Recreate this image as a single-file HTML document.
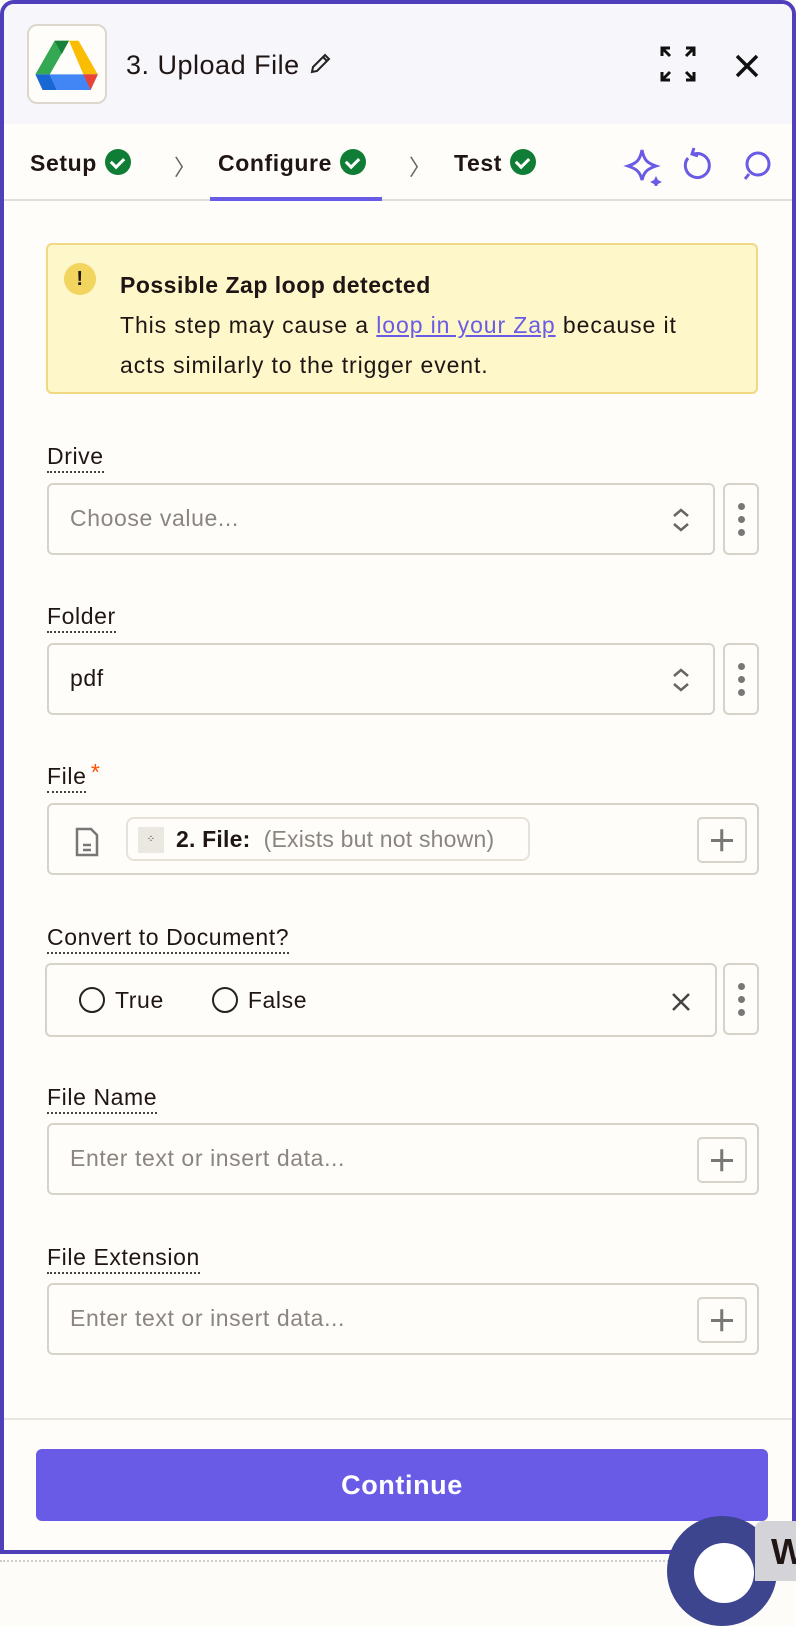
<!DOCTYPE html>
<html><head><style>
*{box-sizing:border-box;margin:0;padding:0}
body{width:796px;height:1568px;background:#fdfcf9;font-family:"Liberation Sans",sans-serif;color:#201515;position:relative;overflow:hidden;letter-spacing:0.6px}
.frame{position:absolute;left:0;top:0;width:796px;height:1554px;border:4px solid #4f3fbb;border-radius:14px 14px 0 0;background:#fffdf9;overflow:hidden}
.hdr{position:absolute;left:0;top:0;right:0;height:120px;background:#f6f6fb}
.logo{position:absolute;left:23px;top:20px;width:80px;height:80px;border:2px solid #dcd8ce;border-radius:10px;background:#fffdf9}
.title{position:absolute;left:122px;top:46px;font-size:27px;letter-spacing:0.5px}
.tabs{position:absolute;left:0;top:120px;right:0;height:77px;border-bottom:2px solid #e3dfd7}
.tab{position:absolute;top:25px;font-size:23px;font-weight:bold}
.ck{display:inline-block;width:26px;height:26px;border-radius:50%;background:#0f7d35;vertical-align:-4px;margin-left:8px;position:relative}
.ck:after{content:"";position:absolute;left:8px;top:6px;width:6px;height:10px;border:solid #fff;border-width:0 3px 3px 0;transform:rotate(45deg)}
.chev{position:absolute;top:26px;color:#666;font-size:22px}
.warn{position:absolute;left:42px;top:239px;width:712px;height:151px;background:#fdf7c9;border:2px solid #f0d884;border-radius:6px}
.lbl{position:absolute;left:43px;font-size:23px;border-bottom:2px dotted #444;padding-bottom:2px;line-height:26px}
.box{position:absolute;left:43px;height:72px;border:2px solid #d7d3cb;border-radius:6px;background:#fffdf9}
.ph{position:absolute;left:21px;top:20px;font-size:23px;color:#8a8580}
.dots{position:absolute;left:719px;width:36px;height:72px;border:2px solid #d7d3cb;border-radius:6px}
.dots i{position:absolute;left:13px;width:7px;height:7px;border-radius:50%;background:#777}
.plus{position:absolute;right:10px;top:12px;width:50px;height:46px;border:2px solid #d7d3cb;border-radius:5px}
.plus:before,.plus:after{content:"";position:absolute;left:12px;top:20px;width:22px;height:2.5px;background:#777}
.plus:after{transform:rotate(90deg)}
.btn{position:absolute;width:732px;height:72px;background:#695be5;border-radius:6px;color:#fff;font-size:27px;font-weight:bold;text-align:center;line-height:72px}
.radio{display:inline-block;width:26px;height:26px;border:2.5px solid #222;border-radius:50%;vertical-align:-5px;margin-right:10px}
.ud{position:absolute;right:22px;top:22px}
</style></head><body>
<div class="frame">
<div class="hdr">
 <div class="logo"><svg width="76" height="76" viewBox="0 0 76 76"><g transform="translate(-8,-8) scale(1.2)"><polygon points="28,19 40,19 24,47 12,47" fill="#34a853"/><polygon points="40,19 48,19 64,47 52,47" fill="#fbbc04"/><polygon points="28,19 40,19 34,30" fill="#188038"/><polygon points="12,47 24,47 30,60 18,60" fill="#1967d2"/><polygon points="24,47 64,47 58,60 30,60" fill="#4285f4"/><polygon points="52,47 64,47 58,60" fill="#ea4335"/></g></svg></div>
 <div class="title">3. Upload File <svg width="24" height="24" viewBox="0 0 24 24" fill="none" stroke="#222" stroke-width="2" style="vertical-align:-2px"><path d="M4 20l1-5L17 3l4 4L9 19z M15 5l4 4"/></svg></div>
 <svg style="position:absolute;left:656px;top:42px" width="36" height="36" viewBox="0 0 36 36" fill="none" stroke="#111" stroke-width="3"><path d="M2 10V2h8M2 2l8 8M26 2h8v8M34 2l-8 8M2 26v8h8M2 34l8-8M34 26v8h-8M34 34l-8-8"/></svg>
 <svg style="position:absolute;left:731px;top:50px" width="24" height="24" viewBox="0 0 24 24" stroke="#111" stroke-width="3.5"><path d="M2 2L22 22M22 2L2 22"/></svg>
</div>
<div class="tabs">
 <div class="tab" style="left:26px">Setup<span class="ck"></span></div>
 <div class="chev" style="left:170px">〉</div>
 <div class="tab" style="left:214px">Configure<span class="ck"></span></div>
 <div style="position:absolute;left:206px;top:73px;width:172px;height:4px;background:#695be5"></div>
 <div class="chev" style="left:405px">〉</div>
 <div class="tab" style="left:450px">Test<span class="ck"></span></div>
 <svg style="position:absolute;left:618px;top:22px" width="150" height="40" viewBox="0 0 150 40" fill="none" stroke="#695be5" stroke-width="3"><path d="M20 4C22 14 25 17 34 20C25 23 22 26 20 34C18 26 15 23 6 20C15 17 18 14 20 4Z"/><path d="M34 30l2 4 4 2-4 2-2 4-2-4-4-2 4-2z" fill="#695be5" stroke="none"/><path d="M72 8a12 12 0 1 1-6 4M72 2l-2 6 6 2"/><circle cx="136" cy="18" r="11"/><path d="M127 28l-4 5"/></svg>
</div>
<div class="warn">
 <div style="position:absolute;left:16px;top:18px;width:32px;height:32px;border-radius:50%;background:#f1d55e;text-align:center;font-weight:bold;font-size:20px;line-height:32px">!</div>
 <div style="position:absolute;left:72px;top:20px;font-size:23px;line-height:40px;letter-spacing:0.9px;white-space:nowrap"><b style="letter-spacing:0.5px">Possible Zap loop detected</b><br>This step may cause a <span style="color:#695be5;text-decoration:underline">loop in your Zap</span> because it<br>acts similarly to the trigger event.</div>
</div>
<div class="lbl" style="top:439px">Drive</div>
<div class="box" style="top:479px;width:668px"><div class="ph">Choose value...</div><svg class="ud" width="20" height="26" viewBox="0 0 20 26" fill="none" stroke="#666" stroke-width="2.5"><path d="M3 9l7-6 7 6M3 17l7 6 7-6"/></svg></div>
<div class="dots" style="top:479px"><i style="top:18px"></i><i style="top:31px"></i><i style="top:44px"></i></div>
<div class="lbl" style="top:599px">Folder</div>
<div class="box" style="top:639px;width:668px"><div class="ph" style="color:#201515">pdf</div><svg class="ud" width="20" height="26" viewBox="0 0 20 26" fill="none" stroke="#666" stroke-width="2.5"><path d="M3 9l7-6 7 6M3 17l7 6 7-6"/></svg></div>
<div class="dots" style="top:639px"><i style="top:18px"></i><i style="top:31px"></i><i style="top:44px"></i></div>
<div class="lbl" style="top:759px">File<span style="color:#ff4f00;position:absolute;right:-14px;top:-4px">*</span></div>
<div class="box" style="top:799px;width:712px">
 <svg style="position:absolute;left:26px;top:22px" width="24" height="30" viewBox="0 0 24 30" fill="none" stroke="#777" stroke-width="2.5"><path d="M2 2h14l6 6v20H2z M8 18h8M8 23h8"/></svg>
 <div style="position:absolute;left:77px;top:12px;height:44px;width:404px;border:2px solid #e6e2da;border-radius:8px;font-size:23px;line-height:40px;padding-left:48px;white-space:nowrap;letter-spacing:0.2px"><span style="position:absolute;left:10px;top:8px;width:26px;height:26px;background:#ebe8e2;font-size:10px;line-height:26px;text-align:center">⁘</span><b>2. File:</b>&nbsp; <span style="color:#8a8580">(Exists but not shown)</span></div>
 <div class="plus"></div>
</div>
<div class="lbl" style="top:920px">Convert to Document?</div>
<div class="box" style="top:959px;width:672px;left:41px;height:74px"><div style="position:absolute;left:32px;top:22px;font-size:23px"><span class="radio"></span>True<span style="display:inline-block;width:48px"></span><span class="radio"></span>False</div>
<svg style="position:absolute;right:24px;top:27px" width="20" height="20" stroke="#444" stroke-width="2.5"><path d="M2 2L18 18M18 2L2 18"/></svg></div>
<div class="dots" style="top:959px;left:719px;height:72px"><i style="top:18px"></i><i style="top:31px"></i><i style="top:44px"></i></div>
<div class="lbl" style="top:1080px">File Name</div>
<div class="box" style="top:1119px;width:712px"><div class="ph">Enter text or insert data...</div><div class="plus"></div></div>
<div class="lbl" style="top:1240px">File Extension</div>
<div class="box" style="top:1279px;width:712px"><div class="ph">Enter text or insert data...</div><div class="plus"></div></div>
<div style="position:absolute;left:0;right:0;top:1414px;height:2px;background:#e8e5df"></div>
<div class="btn" style="left:32px;top:1445px">Continue</div>
</div>
<div style="position:absolute;left:0;top:1560px;width:796px;border-top:2px dotted #ccc"></div>
<div style="position:absolute;left:667px;top:1516px;width:110px;height:110px;border-radius:50%;background:#3d458f"></div>
<div style="position:absolute;left:694px;top:1543px;width:60px;height:60px;border-radius:50%;background:#fff"></div>
<div style="position:absolute;left:755px;top:1521px;width:50px;height:60px;background:#d4d4d8;border-radius:8px 0 0 0;font-size:36px;font-weight:bold;padding:10px 0 0 16px">W</div>
</body></html>
